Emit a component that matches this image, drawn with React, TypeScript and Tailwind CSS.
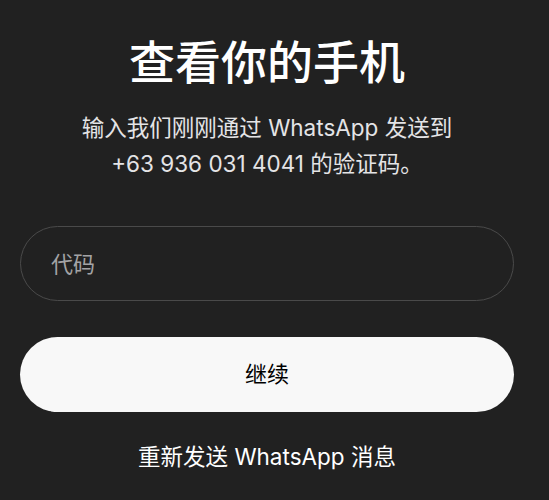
export default function App() {
  return (
    <div
      className="min-h-[500px] w-full bg-[#212121] pl-5 pr-[35px] pt-[30px]"
      style={{ fontFamily: 'Inter, "Noto Sans CJK SC", sans-serif' }}
    >
      <h1 className="text-center text-[46px] font-medium leading-[64px] text-white">
        查看你的手机
      </h1>
      <p className="mx-auto mt-[16px] w-[440px] text-center text-[22.5px] leading-[36px] text-[#e4e4e6]">
        输入我们刚刚通过 WhatsApp 发送到
        <br />
        +63 936 031 4041 的验证码。
      </p>
      <input
        placeholder="代码"
        className="mt-[44px] block h-[75px] w-full rounded-full border-[1.5px] border-[#4a4a4a] bg-transparent px-[30px] text-[22px] text-white outline-none placeholder:text-[#a3a3a5]"
      />
      <button className="mt-[36px] block h-[75px] w-full rounded-full bg-[#f8f8f8] text-[22px] text-black">
        继续
      </button>
      <div className="mt-[28px] text-center text-[22.5px] text-white">
        重新发送 WhatsApp 消息
      </div>
    </div>
  );
}
